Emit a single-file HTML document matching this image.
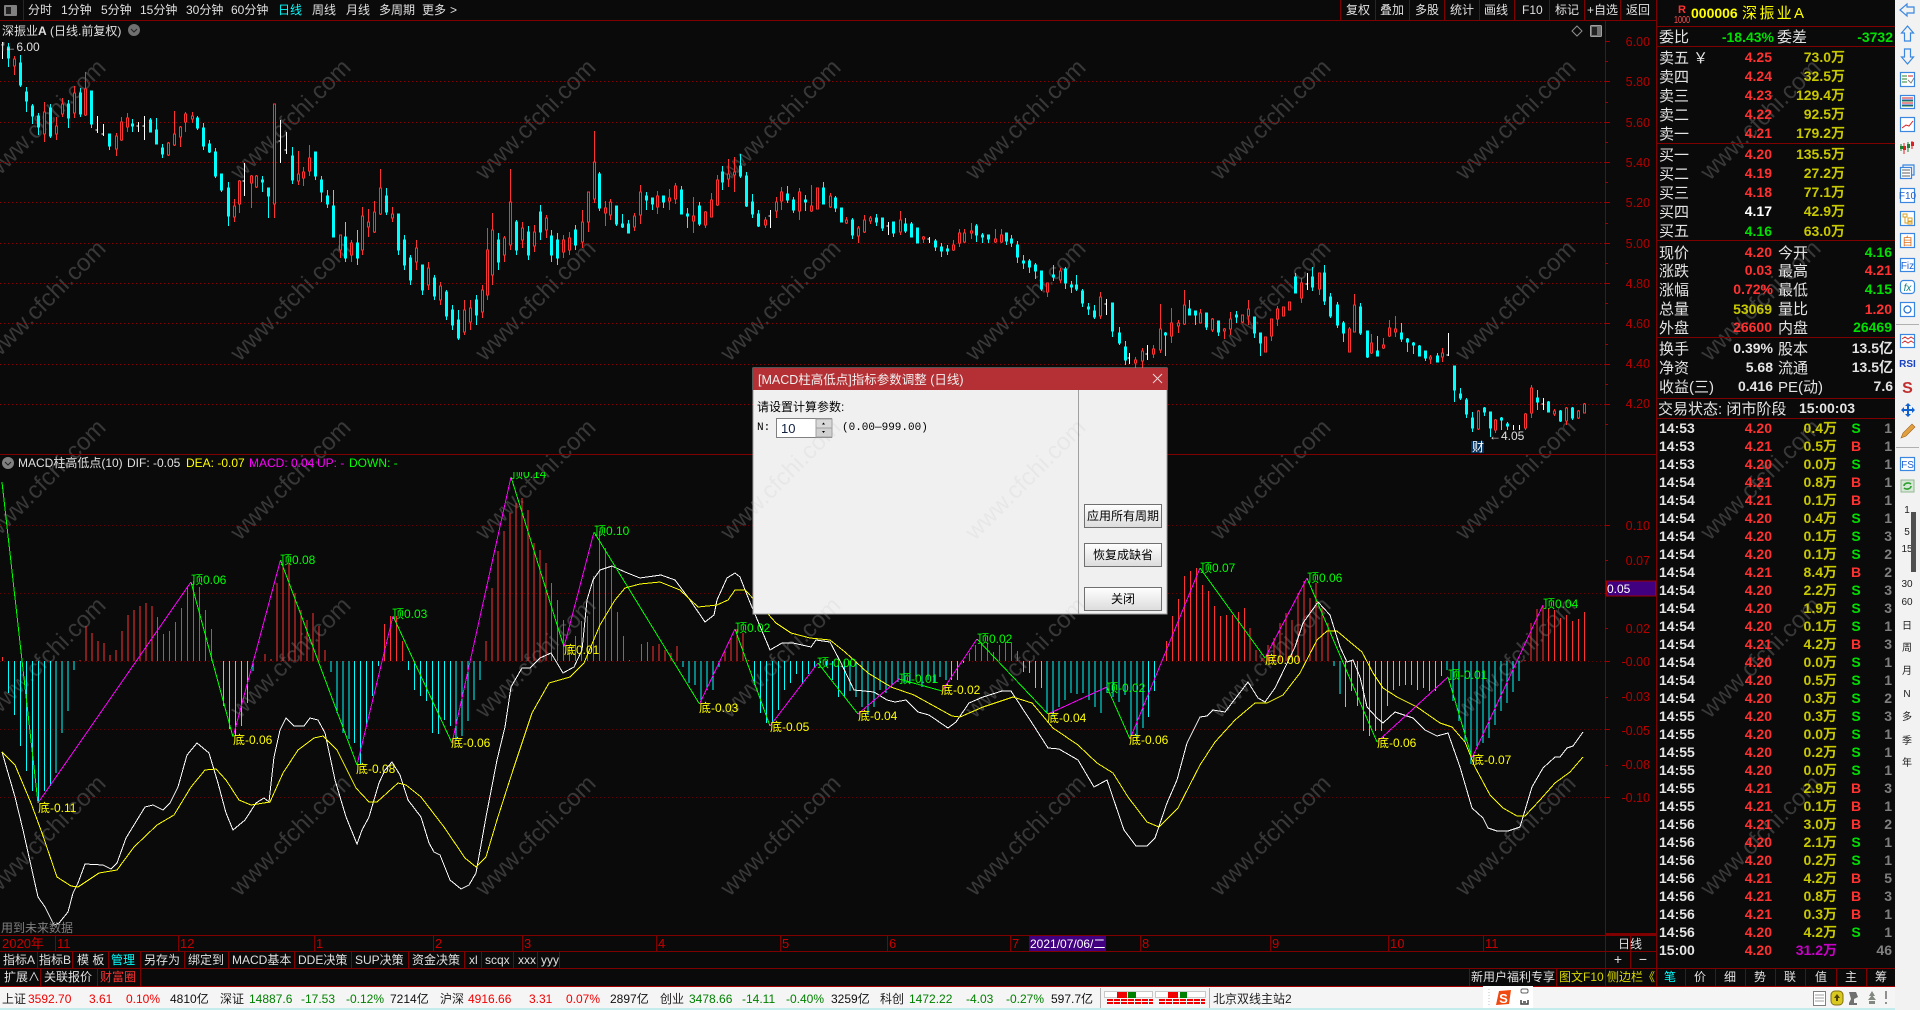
<!DOCTYPE html>
<html lang="zh"><head><meta charset="utf-8"><title>深振业A</title>
<style>
html,body{margin:0;padding:0;background:#0a0a0a;width:1920px;height:1010px;overflow:hidden}
svg{display:block;font-family:"Liberation Sans","WenQuanYi Zen Hei","Noto Sans CJK SC",sans-serif;font-size:12px}
.w text{font-size:24px;fill:#383838;text-anchor:middle}
.wd text{font-size:24px;fill:rgba(0,0,0,.035);text-anchor:middle}
.c{shape-rendering:crispEdges}
.lb text{font-size:15px;fill:#e4e4e4}
.b{font-size:14px;font-weight:bold}
.r{text-anchor:end}
.m{text-anchor:middle}
.ax text{fill:#b40000;text-anchor:end;font-size:12.5px}
.ty text{fill:#ffff00}.tg text{fill:#00ff00}
.nav text{fill:#e0e0e0;font-size:12px}
.tick text{font-size:14px;font-weight:bold}
.st text{font-size:12px}
</style></head><body>
<svg width="1920" height="1010" viewBox="0 0 1920 1010" xmlns="http://www.w3.org/2000/svg">
<defs>
<clipPath id="up"><rect x="0" y="450" width="1605" height="211"/></clipPath>
<clipPath id="dn"><rect x="0" y="661" width="1605" height="270"/></clipPath>
<clipPath id="dl"><rect x="753" y="390" width="414" height="224"/></clipPath>
<clipPath id="top14"><rect x="500" y="472" width="60" height="20"/></clipPath>
<clipPath id="ch"><rect x="0" y="455" width="1605" height="479"/></clipPath>
<linearGradient id="bt" x1="0" y1="0" x2="0" y2="1"><stop offset="0" stop-color="#fff"/><stop offset="1" stop-color="#dcdcdc"/></linearGradient>
<path id="hb" d="M2.5 661v-4m5.97 4v32m5.97-32v54m5.97-54v85m5.97-85v110m5.97-110v130m5.97-130v141m5.97-141v130m5.97-130v125m5.97-125v112m5.97-112v72m5.97-72v50m5.97-50v9m5.97-9v-1m5.97 1v-35m5.97 35v-28m5.97 28v-20m5.97 20v-18m5.97 18v-6m5.97 6v-11m5.97 11v-30m5.97 30v-46m5.97 46v-51m5.97 51v-55m5.97 55v-58m5.97 58v-55m5.97 55v-44m5.97 44v-27m5.97 27v-30m5.97 30v-39m5.97 39v-53m5.97 53v-75m5.97 75v-80m5.97 80v-74m5.97 74v-51m5.97 51v-32m5.97 32m5.97 0v45m5.97-45v68m5.97-68v75m5.97-75v65m5.97-65v42m5.97-42v10m5.97-10m5.97 0v-7m5.97 7v-2m5.97 2v-78m5.97 78v-100m5.97 100v-98m5.97 98v-68m5.97 68v-51m5.97 51v-41m5.97 41v-48m5.97 48v-35m5.97 35v-11m5.97 11v11m5.97-11v52m5.97-52v72m5.97-72v78m5.97-78v82m5.97-82v104m5.97-104v64m5.97-64v35m5.97-35v5m5.97-5v-37m5.97 37v-45m5.97 45v-45m5.97 45v-20m5.97 20v9m5.97-9v29m5.97-29v35m5.97-35v40m5.97-40v72m5.97-72v73m5.97-73v59m5.97-59v65m5.97-65v79m5.97-79v75m5.97-75v60m5.97-60v39m5.97-39v19m5.97-19v-20m5.97 20v-73m5.97 73v-110m5.97 110v-130m5.97 130v-148m5.97 148v-158m5.97 158v-163m5.97 163v-151m5.97 151v-118m5.97 118v-111m5.97 111v-98m5.97 98v-78m5.97 78v-61m5.97 61v-41m5.97 41v-15m5.97 15v-25m5.97 25v-40m5.97 40v-45m5.97 45v-85m5.97 85v-130m5.97 130v-113m5.97 113v-95m5.97 95v-49m5.97 49v-25m5.97 25v-1m5.97 1m5.97 0v-17m5.97 17v-19m5.97 19v-15m5.97 15v-17m5.97 17v-11m5.97 11v-8m5.97 8v-15m5.97 15v6m5.97-6v22m5.97-22v24m5.97-24v39m5.97-39v29m5.97-29v29m5.97-29v6m5.97-6v-9m5.97 9v-24m5.97 24v-32m5.97 32v-28m5.97 28v-1m5.97 1v24m5.97-24v52m5.97-52v62m5.97-62v62m5.97-62v49m5.97-49v29m5.97-29v22m5.97-22v13m5.97-13v22m5.97-22v13m5.97-13v7m5.97-7v2m5.97-2v5m5.97-5v19m5.97-19v36m5.97-36v36m5.97-36v30m5.97-30v36m5.97-36v46m5.97-46v54m5.97-54v46m5.97-46v29m5.97-29v32m5.97-32v24m5.97-24v21m5.97-21v22m5.97-22v22m5.97-22v16m5.97-16v26m5.97-26v19m5.97-19v22m5.97-22v16m5.97-16v19m5.97-19v19m5.97-19v19m5.97-19v2m5.97-2v-8m5.97 8v-16m5.97 16v-19m5.97 19v-18m5.97 18v-9m5.97 9v-16m5.97 16v-19m5.97 19v-18m5.97 18v-10m5.97 10v11m5.97-11v12m5.97-12v27m5.97-27v27m5.97-27v52m5.97-52v56m5.97-56v46m5.97-46v39m5.97-39v32m5.97-32v33m5.97-33v32m5.97-32v39m5.97-39v46m5.97-46v52m5.97-52v32m5.97-32v36m5.97-36v41m5.97-41v34m5.97-34v74m5.97-74v79m5.97-79v67m5.97-67v56m5.97-56v30m5.97-30m5.97 0v-20m5.97 20v-45m5.97 45v-62m5.97 62v-85m5.97 85v-90m5.97 90v-93m5.97 93v-76m5.97 76v-70m5.97 70v-55m5.97 55v-45m5.97 45v-46m5.97 46v-46m5.97 46v-49m5.97 49v-53m5.97 53v-33m5.97 33v-11m5.97 11v-3m5.97 3v-16m5.97 16v-23m5.97 23v-38m5.97 38v-48m5.97 48v-41m5.97 41v-68m5.97 68v-80m5.97 80v-63m5.97 63v-78m5.97 78v-53m5.97 53v-38m5.97 38v5m5.97-5v33m5.97-33v46m5.97-46v30m5.97-30v45m5.97-45v70m5.97-70v75m5.97-75v70m5.97-70v70m5.97-70v45m5.97-45v29m5.97-29v25m5.97-25v24m5.97-24v24m5.97-24v29m5.97-29v27m5.97-27v30m5.97-30v30m5.97-30v15m5.97-15v9m5.97-9v40m5.97-40v60m5.97-60v80m5.97-80v103m5.97-103v85m5.97-85v82m5.97-82v77m5.97-77v64m5.97-64v50m5.97-50v42m5.97-42v31m5.97-31v20m5.97-20v-1m5.97 1v-38m5.97 38v-52m5.97 52v-56m5.97 56v-53m5.97 53v-51m5.97 51v-43m5.97 43v-46m5.97 46v-40m5.97 40v-42m5.97 42v-49"/>
</defs>
<rect width="1920" height="1010" fill="#0a0a0a"/>

<g class="w">
<text transform="translate(51,125) rotate(-45)">www.cfchi.com</text><text transform="translate(296,125) rotate(-45)">www.cfchi.com</text><text transform="translate(541,125) rotate(-45)">www.cfchi.com</text><text transform="translate(786,125) rotate(-45)">www.cfchi.com</text><text transform="translate(1031,125) rotate(-45)">www.cfchi.com</text><text transform="translate(1276,125) rotate(-45)">www.cfchi.com</text><text transform="translate(1521,125) rotate(-45)">www.cfchi.com</text><text transform="translate(1766,125) rotate(-45)">www.cfchi.com</text>
<text transform="translate(51,306) rotate(-45)">www.cfchi.com</text><text transform="translate(296,306) rotate(-45)">www.cfchi.com</text><text transform="translate(541,306) rotate(-45)">www.cfchi.com</text><text transform="translate(786,306) rotate(-45)">www.cfchi.com</text><text transform="translate(1031,306) rotate(-45)">www.cfchi.com</text><text transform="translate(1276,306) rotate(-45)">www.cfchi.com</text><text transform="translate(1521,306) rotate(-45)">www.cfchi.com</text><text transform="translate(1766,306) rotate(-45)">www.cfchi.com</text>
<text transform="translate(51,485) rotate(-45)">www.cfchi.com</text><text transform="translate(296,485) rotate(-45)">www.cfchi.com</text><text transform="translate(541,485) rotate(-45)">www.cfchi.com</text><text transform="translate(786,485) rotate(-45)">www.cfchi.com</text><text transform="translate(1031,485) rotate(-45)">www.cfchi.com</text><text transform="translate(1276,485) rotate(-45)">www.cfchi.com</text><text transform="translate(1521,485) rotate(-45)">www.cfchi.com</text><text transform="translate(1766,485) rotate(-45)">www.cfchi.com</text>
<text transform="translate(51,663) rotate(-45)">www.cfchi.com</text><text transform="translate(296,663) rotate(-45)">www.cfchi.com</text><text transform="translate(541,663) rotate(-45)">www.cfchi.com</text><text transform="translate(786,663) rotate(-45)">www.cfchi.com</text><text transform="translate(1031,663) rotate(-45)">www.cfchi.com</text><text transform="translate(1276,663) rotate(-45)">www.cfchi.com</text><text transform="translate(1521,663) rotate(-45)">www.cfchi.com</text><text transform="translate(1766,663) rotate(-45)">www.cfchi.com</text>
<text transform="translate(51,841) rotate(-45)">www.cfchi.com</text><text transform="translate(296,841) rotate(-45)">www.cfchi.com</text><text transform="translate(541,841) rotate(-45)">www.cfchi.com</text><text transform="translate(786,841) rotate(-45)">www.cfchi.com</text><text transform="translate(1031,841) rotate(-45)">www.cfchi.com</text><text transform="translate(1276,841) rotate(-45)">www.cfchi.com</text><text transform="translate(1521,841) rotate(-45)">www.cfchi.com</text><text transform="translate(1766,841) rotate(-45)">www.cfchi.com</text>
</g>

<!-- grids -->
<path class="c" d="M0 81.5H1605M0 122.5H1605M0 162.5H1605M0 202.5H1605M0 243.5H1605M0 283.5H1605M0 323.5H1605M0 364.5H1605M0 404.5H1605" stroke="#8c0000" stroke-dasharray="1 3" fill="none"/>
<path class="c" d="M0 525.5H1605M0 593.5H1605M0 661.5H1605M0 729.5H1605M0 797.5H1605" stroke="#640000" stroke-dasharray="1 3" fill="none"/>

<!-- candles: cyan -->
<path class="c" fill="#00ffff" stroke="#00ffff" d="M8.5 43V47m-1 0h2v11h-2zm1 11V67M20.5 55V63m-1 0h2v22h-2zm1 22V87M26.5 87V92m-1 0h2v9h-2zm1 9V112M32.5 104V106m-1 0h2v10h-2zm1 10V124M38.5 113V116m-1 0h2v11h-2zm1 11V135M50.5 104V108m-1 0h2v28h-2zm1 28V138M68.5 100V104m-1 0h2v14h-2zm1 14V128M80.5 88V93m-1 0h2v21h-2zm1 21V117M91.5 91V91m-1 0h2v33h-2zm1 33V128M109.5 134V134m-1 0h2v12h-2zm1 12V150M132.5 119V124m-1 0h2v2h-2zm1 2V132M150.5 118V120m-1 0h2v12h-2zm1 12V132M156.5 118V130m-1 0h2v14h-2zm1 14V144M162.5 144V148m-1 0h2v6h-2zm1 6V158M197.5 116V118m-1 0h2v10h-2zm1 10V130M203.5 123V128m-1 0h2v18h-2zm1 18V150M209.5 140V144m-1 0h2v8h-2zm1 8V153M215.5 148V152m-1 0h2v24h-2zm1 24V178M221.5 174V174m-1 0h2v16h-2zm1 16V192M228.5 182V188m-1 0h2v28h-2zm1 28V226M262.5 176V180m-1 0h2v2h-2zm1 2V192M268.5 188V188m-1 0h2v8h-2zm1 8V218M292.5 147V156m-1 0h2v24h-2zm1 24V184M315.5 152V152m-1 0h2v24h-2zm1 24V180M321.5 176V180m-1 0h2v12h-2zm1 12V202M327.5 190V196m-1 0h2v8h-2zm1 8V208M333.5 190V206m-1 0h2v31h-2zm1 31V237M345.5 222V237m-1 0h2v21h-2zm1 21V262M357.5 230V243m-1 0h2v15h-2zm1 15V265M386.5 188V196m-1 0h2v16h-2zm1 16V215M398.5 214V214m-1 0h2v36h-2zm1 36V255M404.5 235V240m-1 0h2v25h-2zm1 25V270M410.5 255V258m-1 0h2v22h-2zm1 22V285M422.5 265V265m-1 0h2v25h-2zm1 25V295M434.5 275V278m-1 0h2v18h-2zm1 18V300M446.5 290V292m-1 0h2v24h-2zm1 24V320M452.5 305V310m-1 0h2v15h-2zm1 15V330M458.5 310V320m-1 0h2v18h-2zm1 18V340M476.5 295V300m-1 0h2v15h-2zm1 15V325M498.5 233V240m-1 0h2v22h-2zm1 22V270M516.5 220V222m-1 0h2v28h-2zm1 28V255M528.5 226V232m-1 0h2v23h-2zm1 23V260M540.5 205V212m-1 0h2v20h-2zm1 20V240M551.5 230V236m-1 0h2v19h-2zm1 19V262M557.5 233V240m-1 0h2v18h-2zm1 18V265M575.5 225V230m-1 0h2v15h-2zm1 15V250M599.5 172V174m-1 0h2v34h-2zm1 34V211M616.5 206V206m-1 0h2v18h-2zm1 18V226M622.5 214V224m-1 0h2v3h-2zm1 3V228M628.5 220V224m-1 0h2v9h-2zm1 9V233M646.5 192V196m-1 0h2v4h-2zm1 4V210M652.5 198V198m-1 0h2v6h-2zm1 6V210M663.5 196V196m-1 0h2v6h-2zm1 6V208M681.5 186V190m-1 0h2v24h-2zm1 24V214M687.5 208V214m-1 0h2v2h-2zm1 2V228M699.5 202V206m-1 0h2v18h-2zm1 18V226M722.5 166V172m-1 0h2v10h-2zm1 10V190M740.5 154V166m-1 0h2v10h-2zm1 10V178M746.5 172V176m-1 0h2v30h-2zm1 30V207M752.5 194V202m-1 0h2v12h-2zm1 12V218M758.5 210V214m-1 0h2v12h-2zm1 12V227M787.5 186V194m-1 0h2v6h-2zm1 6V203M793.5 197V200m-1 0h2v10h-2zm1 10V213M805.5 195V200m-1 0h2v2h-2zm1 2V211M823.5 182V188m-1 0h2v16h-2zm1 16V204M835.5 196V198m-1 0h2v10h-2zm1 10V212M841.5 208V208m-1 0h2v14h-2zm1 14V222M852.5 218V220m-1 0h2v15h-2zm1 15V239M876.5 214V218m-1 0h2v4h-2zm1 4V226M882.5 218V218m-1 0h2v10h-2zm1 10V231M893.5 222V222m-1 0h2v11h-2zm1 11V237M905.5 218V224m-1 0h2v7h-2zm1 7V233M911.5 222V224m-1 0h2v13h-2zm1 13V237M917.5 228V228m-1 0h2v15h-2zm1 15V243M935.5 239V241m-1 0h2v6h-2zm1 6V251M941.5 243V247m-1 0h2v4h-2zm1 4V257M947.5 245V249m-1 0h2v2h-2zm1 2V255M976.5 224V226m-1 0h2v9h-2zm1 9V242M982.5 233V235m-1 0h2v2h-2zm1 2V243M988.5 235V235m-1 0h2v4h-2zm1 4V243M1006.5 233V233m-1 0h2v8h-2zm1 8V245M1011.5 235V239m-1 0h2v4h-2zm1 4V247M1017.5 241V245m-1 0h2v12h-2zm1 12V263M1023.5 255V261m-1 0h2v2h-2zm1 2V269M1029.5 259V261m-1 0h2v6h-2zm1 6V273M1035.5 263V265m-1 0h2v6h-2zm1 6V279M1041.5 271V271m-1 0h2v18h-2zm1 18V291M1053.5 265V275m-1 0h2v2h-2zm1 2V281M1065.5 267V269m-1 0h2v14h-2zm1 14V289M1071.5 281V285m-1 0h2v2h-2zm1 2V293M1076.5 275V285m-1 0h2v4h-2zm1 4V291M1082.5 289V291m-1 0h2v12h-2zm1 12V307M1088.5 303V307m-1 0h2v2h-2zm1 2V315M1094.5 305V311m-1 0h2v6h-2zm1 6V319M1112.5 303V303m-1 0h2v28h-2zm1 28V337M1119.5 327V333m-1 0h2v10h-2zm1 10V345M1125.5 341V347m-1 0h2v13h-2zm1 13V365M1165.5 332V333m-1 0h2v2h-2zm1 2V356M1189.5 300V309m-1 0h2v6h-2zm1 6V315M1195.5 311V311m-1 0h2v4h-2zm1 4V325M1206.5 313V313m-1 0h2v14h-2zm1 14V330M1218.5 321V321m-1 0h2v11h-2zm1 11V336M1236.5 311V315m-1 0h2v2h-2zm1 2V323M1254.5 317V317m-1 0h2v16h-2zm1 16V338M1260.5 333V333m-1 0h2v10h-2zm1 10V356M1295.5 273V277m-1 0h2v16h-2zm1 16V293M1312.5 267V277m-1 0h2v10h-2zm1 10V291M1324.5 265V273m-1 0h2v28h-2zm1 28V305M1330.5 293V297m-1 0h2v19h-2zm1 19V318M1337.5 302V305m-1 0h2v20h-2zm1 20V328M1343.5 321V323m-1 0h2v10h-2zm1 10V342M1360.5 303V307m-1 0h2v26h-2zm1 26V335M1367.5 331V331m-1 0h2v26h-2zm1 26V358M1377.5 336V351m-1 0h2v5h-2zm1 5V356M1401.5 323V333m-1 0h2v6h-2zm1 6V342M1407.5 338V339m-1 0h2v3h-2zm1 3V352M1413.5 342V343m-1 0h2v2h-2zm1 2V354M1419.5 345V346m-1 0h2v10h-2zm1 10V356M1425.5 351V351m-1 0h2v7h-2zm1 7V361M1437.5 353V356m-1 0h2v6h-2zm1 6V362M1454.5 366V366m-1 0h2v24h-2zm1 24V402M1460.5 388V394m-1 0h2v4h-2zm1 4V400M1466.5 398V400m-1 0h2v14h-2zm1 14V418M1472.5 412V418m-1 0h2v10h-2zm1 10V432M1484.5 407V408m-1 0h2v4h-2zm1 4V416M1490.5 412V412m-1 0h2v16h-2zm1 16V437M1501.5 417V418m-1 0h2v2h-2zm1 2V430M1507.5 422V424m-1 0h2v2h-2zm1 2V430M1537.5 390V398m-1 0h2v4h-2zm1 4V410M1548.5 401V402m-1 0h2v10h-2zm1 10V412M1560.5 410V411m-1 0h2v10h-2zm1 10V422M1572.5 407V408m-1 0h2v10h-2zm1 10V420"/>
<!-- candles: red -->
<path class="c" fill="#0a0a0a" stroke="#ff3232" d="M14.5 56V59m-1 0h2v7h-2zm1 7V75M44.5 102V112m-1 0h2v22h-2zm1 22V142M56.5 117V126m-1 0h2v8h-2zm1 8V140M62.5 98V104m-1 0h2v10h-2zm1 10V117M74.5 86V93m-1 0h2v20h-2zm1 20V118M85.5 72V89m-1 0h2v26h-2zm1 26V116M116.5 133V136m-1 0h2v13h-2zm1 13V156M121.5 117V122m-1 0h2v18h-2zm1 18V141M127.5 113V118m-1 0h2v9h-2zm1 9V132M168.5 142V143m-1 0h2v12h-2zm1 12V156M174.5 111V134m-1 0h2v11h-2zm1 11V146M180.5 126V127m-1 0h2v10h-2zm1 10V147M185.5 112V114m-1 0h2v8h-2zm1 8V132M192.5 112V116m-1 0h2v3h-2zm1 3V123M234.5 199V206m-1 0h2v11h-2zm1 11V222M239.5 180V181m-1 0h2v23h-2zm1 23V213M251.5 175V176m-1 0h2v7h-2zm1 7V208M256.5 175V176m-1 0h2v11h-2zm1 11V188M274.5 104V104m-1 0h2v100h-2zm1 100V218M298.5 151V174m-1 0h2v7h-2zm1 7V185M303.5 167V172m-1 0h2v6h-2zm1 6V186M309.5 145V158m-1 0h2v13h-2zm1 13V176M340.5 235V235m-1 0h2v15h-2zm1 15V258M351.5 240V243m-1 0h2v12h-2zm1 12V262M362.5 207V216m-1 0h2v34h-2zm1 34V255M368.5 209V222m-1 0h2v5h-2zm1 5V237M374.5 201V212m-1 0h2v20h-2zm1 20V233M380.5 169V188m-1 0h2v26h-2zm1 26V215M392.5 207V214m-1 0h2v4h-2zm1 4V222M416.5 240V248m-1 0h2v14h-2zm1 14V270M428.5 262V268m-1 0h2v17h-2zm1 17V290M440.5 282V286m-1 0h2v14h-2zm1 14V305M464.5 300V310m-1 0h2v22h-2zm1 22V335M470.5 300V308m-1 0h2v14h-2zm1 14V330M482.5 285V290m-1 0h2v22h-2zm1 22V318M487.5 228V250m-1 0h2v45h-2zm1 45V300M492.5 213V230m-1 0h2v45h-2zm1 45V285M504.5 236V238m-1 0h2v17h-2zm1 17V262M510.5 169V202m-1 0h2v43h-2zm1 43V250M522.5 222V228m-1 0h2v12h-2zm1 12V248M534.5 225V232m-1 0h2v14h-2zm1 14V252M546.5 215V218m-1 0h2v12h-2zm1 12V238M563.5 235V240m-1 0h2v12h-2zm1 12V258M569.5 232V238m-1 0h2v12h-2zm1 12V255M582.5 210V222m-1 0h2v20h-2zm1 20V248M588.5 192V192m-1 0h2v30h-2zm1 30V232M594.5 131V162m-1 0h2v37h-2zm1 37V203M605.5 201V208m-1 0h2v5h-2zm1 5V226M610.5 199V202m-1 0h2v13h-2zm1 13V220M634.5 213V216m-1 0h2v11h-2zm1 11V231M640.5 185V192m-1 0h2v23h-2zm1 23V224M657.5 191V196m-1 0h2v11h-2zm1 11V214M669.5 189V198m-1 0h2v3h-2zm1 3V210M675.5 183V186m-1 0h2v13h-2zm1 13V204M693.5 197V216m-1 0h2v5h-2zm1 5V233M705.5 211V212m-1 0h2v13h-2zm1 13V228M711.5 193V200m-1 0h2v17h-2zm1 17V217M717.5 175V180m-1 0h2v25h-2zm1 25V206M728.5 159V174m-1 0h2v5h-2zm1 5V187M734.5 157V172m-1 0h2v3h-2zm1 3V192M765.5 217V220m-1 0h2v5h-2zm1 5V228M776.5 197V202m-1 0h2v9h-2zm1 9V218M781.5 187V192m-1 0h2v9h-2zm1 9V210M799.5 188V192m-1 0h2v19h-2zm1 19V220M811.5 185V206m-1 0h2v5h-2zm1 5V212M817.5 188V188m-1 0h2v21h-2zm1 21V209M830.5 193V196m-1 0h2v11h-2zm1 11V208M846.5 217V220m-1 0h2v3h-2zm1 3V224M858.5 226V228m-1 0h2v8h-2zm1 8V243M864.5 215V220m-1 0h2v12h-2zm1 12V233M870.5 216V218m-1 0h2v3h-2zm1 3V224M900.5 211V220m-1 0h2v12h-2zm1 12V235M923.5 236V237m-1 0h2v2h-2zm1 2V243M953.5 240V245m-1 0h2v5h-2zm1 5V251M959.5 229V233m-1 0h2v10h-2zm1 10V247M964.5 229V233m-1 0h2v9h-2zm1 9V243M971.5 223V231m-1 0h2v2h-2zm1 2V239M995.5 229V239m-1 0h2v3h-2zm1 3V243M1001.5 229V235m-1 0h2v7h-2zm1 7V243M1047.5 283V283m-1 0h2v9h-2zm1 9V297M1060.5 268V271m-1 0h2v9h-2zm1 9V283M1100.5 292V297m-1 0h2v19h-2zm1 19V319M1135.5 357V360m-1 0h2v3h-2zm1 3V368M1142.5 348V351m-1 0h2v10h-2zm1 10V368M1153.5 345V349m-1 0h2v5h-2zm1 5V358M1160.5 304V329m-1 0h2v21h-2zm1 21V353M1171.5 308V323m-1 0h2v13h-2zm1 13V343M1178.5 320V323m-1 0h2v3h-2zm1 3V333M1184.5 290V305m-1 0h2v19h-2zm1 19V325M1200.5 309V313m-1 0h2v10h-2zm1 10V323M1212.5 318V319m-1 0h2v11h-2zm1 11V332M1224.5 328V329m-1 0h2v2h-2zm1 2V339M1230.5 312V319m-1 0h2v10h-2zm1 10V335M1242.5 315V315m-1 0h2v7h-2zm1 7V323M1248.5 300V309m-1 0h2v7h-2zm1 7V325M1265.5 337V337m-1 0h2v15h-2zm1 15V352M1271.5 319V319m-1 0h2v17h-2zm1 17V341M1277.5 306V309m-1 0h2v10h-2zm1 10V326M1283.5 307V307m-1 0h2v9h-2zm1 9V316M1289.5 302V302m-1 0h2v8h-2zm1 8V310M1301.5 278V283m-1 0h2v15h-2zm1 15V303M1319.5 273V273m-1 0h2v16h-2zm1 16V295M1349.5 327V329m-1 0h2v23h-2zm1 23V352M1354.5 294V305m-1 0h2v27h-2zm1 27V332M1371.5 334V343m-1 0h2v10h-2zm1 10V354M1383.5 338V345m-1 0h2v3h-2zm1 3V349M1389.5 320V328m-1 0h2v8h-2zm1 8V337M1395.5 316V329m-1 0h2v3h-2zm1 3V337M1430.5 355V357m-1 0h2v2h-2zm1 2V364M1442.5 348V353m-1 0h2v4h-2zm1 4V362M1478.5 410V411m-1 0h2v18h-2zm1 18V430M1495.5 419V420m-1 0h2v10h-2zm1 10V433M1525.5 413V414m-1 0h2v14h-2zm1 14V430M1531.5 385V388m-1 0h2v25h-2zm1 25V418M1554.5 409V411m-1 0h2v3h-2zm1 3V416M1566.5 407V408m-1 0h2v13h-2zm1 13V425M1578.5 410V411m-1 0h2v7h-2zm1 7V419M1584.5 403V404m-1 0h2v9h-2zm1 9V413"/>
<!-- candles: white doji -->
<path class="c" fill="none" stroke="#fff" d="M2.5 42V59M97.5 116V133m-2-3h2M103.5 124V136m-2-2h2M138.5 122V132m-2-6h2M144.5 116V140m-2-14h2M244.5 163V196m-2-15h2M280.5 120V163m-2-22h2M286.5 132V154m-2-4h2M770.5 210V228m-2-12h2M888.5 222V235m-2-9h2M929.5 237V243m-2-4h2M1106.5 299V315m-2-11h2M1129.5 353V364m-2-6h2M1147.5 345V360m-2-6h2M1307.5 273V290m-2-6h2M1448.5 333V356m-2-1h2M1513.5 425V430M1519.5 425V430M1543.5 398V410m-2-6h2"/>

<!-- MACD histogram -->
<g class="c" fill="none">
<g clip-path="url(#up)"><use href="#hb" stroke="#ff3232"/></g>
<g clip-path="url(#dn)"><use href="#hb" stroke="#00ffff"/></g>
</g>

<!-- DIF / DEA -->
<g clip-path="url(#ch)" fill="none" stroke-width="1" class="c">
<polyline stroke="#fff" points="2,752 15,797 23,830 38,897 45,907 54,925 59,923 68,912 73,893 78,883 85,864 103,865 111,869 117,863 126,838 145,807 153,805 163,810 170,803 178,787 187,755 197,743 209,753 218,783 226,813 233,830 245,820 256,803 264,798 269,802 274,757 280,730 286,718 294,726 304,726 310,718 318,720 325,733 335,780 346,817 357,844 362,830 369,817 379,783 385,770 392,762 400,775 408,800 421,817 429,843 434,852 440,855 450,880 461,889 469,885 476,873 486,817 497,760 505,727 511,687 522,668 530,668 540,658 551,653 563,673 574,667 582,650 587,600 593,580 600,570 612,566 625,572 640,578 661,575 675,580 690,600 705,622 714,615 717,600 727,578 735,573 740,577 749,600 770,650 782,643 793,643 811,647 816,640 830,642 841,663 854,690 874,692 887,700 895,702 906,700 918,712 929,715 948,728 956,722 969,703 983,697 1002,691 1011,691 1032,723 1048,748 1059,749 1078,760 1094,787 1107,780 1124,830 1136,846 1147,846 1155,838 1167,803 1177,780 1187,743 1200,717 1207,716 1213,710 1225,712 1248,682 1258,698 1265,702 1275,688 1295,647 1303,623 1318,602 1330,615 1340,647 1347,662 1353,660 1360,677 1367,707 1377,718 1383,723 1395,712 1413,718 1425,730 1437,736 1448,733 1460,767 1472,808 1483,818 1488,828 1497,831 1508,831 1520,827 1532,787 1543,768 1555,757 1560,757 1567,748 1573,746 1583,732"/>
<polyline stroke="#ffff00" points="2,752 15,765 31,803 42,833 57,877 71,886 78,887 99,873 117,870 134,847 157,825 174,815 191,787 205,770 216,769 226,780 239,800 251,805 270,802 283,773 298,750 314,738 323,736 337,750 356,788 369,802 377,802 398,783 406,785 421,797 444,827 465,858 476,867 486,857 497,820 513,770 532,713 549,683 570,677 584,663 600,625 615,600 625,588 640,584 660,582 680,590 698,607 717,605 728,600 735,590 745,590 768,614 776,623 791,633 810,638 830,640 845,652 868,673 891,687 914,695 952,716 960,717 983,707 1013,697 1032,703 1053,728 1078,745 1097,763 1113,773 1128,797 1147,822 1159,827 1178,808 1200,765 1215,742 1235,720 1255,703 1267,703 1283,695 1300,673 1317,640 1327,631 1337,631 1350,642 1362,652 1373,673 1383,688 1397,697 1417,707 1440,723 1452,727 1465,742 1475,767 1490,795 1503,808 1517,816 1525,816 1540,800 1555,783 1570,772 1583,757"/>
<!-- zigzag -->
<path stroke="#ff00ff" d="M38 803L191 582M233 737L280.500 560M357 765L393 616M452 743L511 477M564 647L594 532M699.500 704L735 629M770 726L818 663M858 714L899 679M942 691L977 639M1048 714L1107 687M1130 739L1200 568M1265 658L1307 578M1377 742L1448 677M1472 758L1543 605"/>
<path stroke="#00ff00" d="M2 482L38 803M191 582L233 737M280.500 560L357 765M393 616L452 743M511 477L564 647M594 532L699.500 704M735 629L770 726M818 663L858 714M899 679L942 691M977 639L1048 714M1107 687L1130 739M1200 568L1265 658M1307 578L1377 742M1448 677L1472 758"/>
</g>

<!-- pivot labels -->
<g class="tg">
<text x="191" y="584">顶0.06</text><text x="280" y="564">顶0.08</text><text x="392" y="618">顶0.03</text><text x="511" y="478" clip-path="url(#top14)">顶0.14</text><text x="594" y="535">顶0.10</text><text x="735" y="632">顶0.02</text><text x="817" y="667">顶-0.00</text><text x="899" y="683">顶-0.01</text><text x="977" y="643">顶0.02</text><text x="1106" y="692">顶-0.02</text><text x="1200" y="572">顶0.07</text><text x="1307" y="582">顶0.06</text><text x="1448" y="679">顶-0.01</text><text x="1543" y="608">顶0.04</text>
</g>
<g class="ty">
<text x="38" y="812">底-0.11</text><text x="233" y="744">底-0.06</text><text x="356" y="773">底-0.08</text><text x="451" y="747">底-0.06</text><text x="564" y="654">底0.01</text><text x="699" y="712">底-0.03</text><text x="770" y="731">底-0.05</text><text x="858" y="720">底-0.04</text><text x="941" y="694">底-0.02</text><text x="1047" y="722">底-0.04</text><text x="1129" y="744">底-0.06</text><text x="1265" y="664">底0.00</text><text x="1377" y="747">底-0.06</text><text x="1472" y="764">底-0.07</text>
</g>

<!-- titles over chart -->
<text x="2" y="35" fill="#e0e0e0">深振业<tspan font-weight="bold">A</tspan> (日线.前复权)</text>
<circle cx="134" cy="30" r="6" fill="#707070"/><path d="M131 29l3 3 3-3" fill="none" stroke="#222"/>
<text x="1" y="51" fill="#e0e0e0">f←6.00</text>
<path d="M1577 26l5 5-5 5-5-5z" fill="none" stroke="#909090"/>
<rect x="1590.500" y="25.500" width="11" height="11" rx="1" fill="#707070" stroke="#a0a0a0"/><rect x="1592" y="27" width="5" height="8" fill="#222"/>
<text x="1489" y="440" fill="#e0e0e0">←4.05</text>
<rect x="1471" y="441" width="13" height="12" fill="#003060"/><text x="1472" y="451" fill="#fff">财</text>
<circle cx="8" cy="463" r="6" fill="#808080"/><path d="M5 462l3 3 3-3" fill="none" stroke="#222"/>
<text x="18" y="467" fill="#e0e0e0">MACD柱高低点(10)</text>
<text x="127" y="467" fill="#e0e0e0">DIF: -0.05</text>
<text x="186" y="467" fill="#ffff00">DEA: -0.07</text>
<text x="249" y="467" fill="#ff00ff">MACD: 0.04</text>
<text x="317" y="467" fill="#ff00ff">UP: -</text>
<text x="349" y="467" fill="#00ff00">DOWN: -</text>
<text x="1" y="932" fill="#808080">用到未来数据</text>

<!-- frame lines -->
<path class="c" stroke="#800000" fill="none" d="M0 20.500H1656M0 454.500H1656M0 935.500H1656M0 951.500H1656M0 968.500H1656M23.500 0V20M1340.500 0V20M1375.500 0V20M1409.500 0V20M1444.500 0V20M1479.500 0V20M1514.500 0V20M1549.500 0V20M1584.500 0V20M1620.500 0V20M1605.500 20V968M1656.500 0V986M1606 934.500H1656M1606 933.500H1656M1630.500 935V968M1656 26.500H1895M1656 46.500H1895M1656 143.500H1895M1656 240.500H1895M1656 337.500H1895M1656 398.500H1895M1656 418.500H1895M1656 968.500H1895"/>
<path class="c" stroke="#a00000" fill="none" d="M1605 41.500h5M1605 61.500h3M1605 81.500h5M1605 102.500h3M1605 122.500h5M1605 142.500h3M1605 162.500h5M1605 182.500h3M1605 202.500h5M1605 223.500h3M1605 243.500h5M1605 263.500h3M1605 283.500h5M1605 303.500h3M1605 323.500h5M1605 344.500h3M1605 364.500h5M1605 384.500h3M1605 404.500h5M1605 424.500h3M1605 525.500h5M1605 560.500h3M1605 593.500h5M1605 628.500h3M1605 661.500h5M1605 697.500h3M1605 729.500h5M1605 765.500h3M1605 797.500h5"/>

<!-- y axis labels -->
<g class="ax">
<text x="1650" y="46">6.00</text><text x="1650" y="86">5.80</text><text x="1650" y="127">5.60</text><text x="1650" y="167">5.40</text><text x="1650" y="207">5.20</text><text x="1650" y="248">5.00</text><text x="1650" y="288">4.80</text><text x="1650" y="328">4.60</text><text x="1650" y="368">4.40</text><text x="1650" y="408">4.20</text>
<text x="1650" y="530">0.10</text><text x="1650" y="565">0.07</text><text x="1650" y="633">0.02</text><text x="1650" y="666">-0.00</text><text x="1650" y="701">-0.03</text><text x="1650" y="735">-0.05</text><text x="1650" y="769">-0.08</text><text x="1650" y="802">-0.10</text>
</g>
<rect class="c" x="1606.500" y="581" width="49" height="15" fill="#400080" stroke="#a00000"/>
<text x="1607" y="593" fill="#fff">0.05</text>

<!-- top nav -->
<rect x="4" y="5" width="13" height="11" rx="1" fill="#808080"/><rect x="6" y="7" width="5" height="7" fill="#222"/>
<g class="nav">
<text x="28" y="14">分时</text><text x="61" y="14">1分钟</text><text x="101" y="14">5分钟</text><text x="140" y="14">15分钟</text><text x="186" y="14">30分钟</text><text x="231" y="14">60分钟</text><text x="278" y="14" style="fill:#00ffff">日线</text><text x="312" y="14">周线</text><text x="346" y="14">月线</text><text x="379" y="14">多周期</text><text x="422" y="14">更多</text><text x="450" y="14">&gt;</text>
<text x="1346" y="14">复权</text><text x="1380" y="14">叠加</text><text x="1415" y="14">多股</text><text x="1450" y="14">统计</text><text x="1484" y="14">画线</text><text x="1522" y="14">F10</text><text x="1555" y="14">标记</text><text x="1587" y="14">+自选</text><text x="1626" y="14">返回</text>
</g>

<!-- time axis -->
<path class="c" stroke="#800000" d="M55.500 935V951M178.500 935V951M314.500 935V951M433.500 935V951M522.500 935V951M656.500 935V951M780.500 935V951M887.500 935V951M1010.500 935V951M1140.500 935V951M1270.500 935V951M1388.500 935V951M1483.500 935V951M37.500 951V968M72.500 951V968M108.500 951V968M140.500 951V968M184.500 951V968M228.500 951V968M294.500 951V968M351.500 951V968M408.500 951V968M464.500 951V968M481.500 951V968M513.500 951V968M537.500 951V968M559.500 951V968M40.500 968V986M97.500 968V986M140.500 968V986M1469.500 968V986M1556.500 968V986M1605.500 968V986M1685.500 968V986M1715.500 968V986M1745.500 968V986M1775.500 968V986M1805.500 968V986M1836.500 968V986M1866.500 968V986"/>
<g fill="#c80000" font-size="13">
<text x="2" y="948">2020年</text><text x="57" y="948">11</text><text x="180" y="948">12</text><text x="316" y="948">1</text><text x="435" y="948">2</text><text x="524" y="948">3</text><text x="658" y="948">4</text><text x="782" y="948">5</text><text x="889" y="948">6</text><text x="1012" y="948">7</text><text x="1142" y="948">8</text><text x="1272" y="948">9</text><text x="1390" y="948">10</text><text x="1485" y="948">11</text>
</g>
<rect class="c" x="1029" y="936" width="77" height="15" fill="#400080"/>
<text x="1030" y="948" fill="#fff">2021/07/06/二</text>
<text x="1618" y="948" fill="#e0e0e0" >日线</text>
<text x="1618" y="964" fill="#e0e0e0" class="m" font-size="14">+</text><text x="1643" y="964" fill="#e0e0e0" class="m" font-size="14">−</text>

<!-- tabs -->
<g class="nav">
<text x="3" y="964">指标A</text><text x="39" y="964">指标B</text><text x="77" y="964">模 板</text><text x="111" y="964" style="fill:#00ffff">管理</text><text x="144" y="964">另存为</text><text x="188" y="964">绑定到</text><text x="232" y="964">MACD基本</text><text x="298" y="964">DDE决策</text><text x="355" y="964">SUP决策</text><text x="412" y="964">资金决策</text><text x="469" y="964">xl</text><text x="485" y="964">scqx</text><text x="518" y="964">xxx</text><text x="541" y="964">yyy</text>
<text x="4" y="981">扩展∧</text><text x="44" y="981">关联报价</text><text x="100" y="981" style="fill:#ff3232">财富圈</text>
<text x="1471" y="981">新用户福利专享</text><text x="1559" y="981" style="fill:#d8d800">图文F10</text><text x="1607" y="981" style="fill:#d8d800">侧边栏《</text>
<text x="1670" y="981" class="m" style="fill:#00ffff;text-anchor:middle">笔</text><text x="1700" y="981" style="text-anchor:middle">价</text><text x="1730" y="981" style="text-anchor:middle">细</text><text x="1760" y="981" style="text-anchor:middle">势</text><text x="1790" y="981" style="text-anchor:middle">联</text><text x="1821" y="981" style="text-anchor:middle">值</text><text x="1851" y="981" style="text-anchor:middle">主</text><text x="1881" y="981" style="text-anchor:middle">筹</text>
</g>

<!-- right panel -->
<text x="1682" y="13" fill="#ff3232" font-size="11" font-weight="bold" class="m">R</text>
<text x="1682" y="23" fill="#ff5050" font-size="10" class="m" textLength="16" lengthAdjust="spacingAndGlyphs">1000</text>
<text x="1691" y="18" fill="#ffff00" font-size="14" font-weight="bold">000006</text>
<text x="1742" y="18" fill="#ffff00" font-size="15" textLength="62">深振业A</text>
<g class="lb">
<text x="1659" y="42">委比</text><text x="1777" y="42">委差</text>
<text x="1659" y="63">卖五 ￥</text><text x="1659" y="82">卖四</text><text x="1659" y="101">卖三</text><text x="1659" y="120">卖二</text><text x="1659" y="139">卖一</text>
<text x="1659" y="160">买一</text><text x="1659" y="179">买二</text><text x="1659" y="198">买三</text><text x="1659" y="217">买四</text><text x="1659" y="236">买五</text>
<text x="1659" y="258">现价</text><text x="1778" y="258">今开</text>
<text x="1659" y="276">涨跌</text><text x="1778" y="276">最高</text>
<text x="1659" y="295">涨幅</text><text x="1778" y="295">最低</text>
<text x="1659" y="314">总量</text><text x="1778" y="314">量比</text>
<text x="1659" y="333">外盘</text><text x="1778" y="333">内盘</text>
<text x="1659" y="354">换手</text><text x="1778" y="354">股本</text>
<text x="1659" y="373">净资</text><text x="1778" y="373">流通</text>
<text x="1659" y="392">收益(三)</text><text x="1778" y="392">PE(动)</text>
<text x="1658" y="414">交易状态: 闭市阶段</text>
</g>
<g class="b">
<text x="1774" y="42" class="r" fill="#00e000">-18.43%</text><text x="1893" y="42" class="r" fill="#00e000">-3732</text>
<g class="r" fill="#ff3232" text-anchor="end"><text x="1772" y="62">4.25</text><text x="1772" y="81">4.24</text><text x="1772" y="100">4.23</text><text x="1772" y="119">4.22</text><text x="1772" y="138">4.21</text><text x="1772" y="159">4.20</text><text x="1772" y="178">4.19</text><text x="1772" y="197">4.18</text></g>
<text x="1772" y="216" class="r" fill="#fff">4.17</text><text x="1772" y="236" class="r" fill="#00e000">4.16</text>
<g class="r" fill="#c8c800" text-anchor="end"><text x="1845" y="62">73.0万</text><text x="1845" y="81">32.5万</text><text x="1845" y="100">129.4万</text><text x="1845" y="119">92.5万</text><text x="1845" y="138">179.2万</text><text x="1845" y="159">135.5万</text><text x="1845" y="178">27.2万</text><text x="1845" y="197">77.1万</text><text x="1845" y="216">42.9万</text><text x="1845" y="236">63.0万</text></g>
<text x="1772" y="257" class="r" fill="#ff3232">4.20</text><text x="1892" y="257" class="r" fill="#00e000">4.16</text>
<text x="1772" y="275" class="r" fill="#ff3232">0.03</text><text x="1892" y="275" class="r" fill="#ff3232">4.21</text>
<text x="1773" y="294" class="r" fill="#ff3232">0.72%</text><text x="1892" y="294" class="r" fill="#00e000">4.15</text>
<text x="1772" y="314" class="r" fill="#c8c800">53069</text><text x="1892" y="314" class="r" fill="#ff3232">1.20</text>
<text x="1772" y="332" class="r" fill="#ff3232">26600</text><text x="1892" y="332" class="r" fill="#00e000">26469</text>
<g class="r" fill="#e4e4e4" text-anchor="end"><text x="1773" y="353">0.39%</text><text x="1893" y="353">13.5亿</text><text x="1773" y="372">5.68</text><text x="1893" y="372">13.5亿</text><text x="1773" y="391">0.416</text><text x="1893" y="391">7.6</text></g>
<text x="1799" y="413" fill="#e4e4e4">15:00:03</text>
</g>

<!-- ticks -->
<g class="tick">
<g fill="#e4e4e4">
<text x="1659" y="433">14:53</text><text x="1659" y="451">14:53</text><text x="1659" y="469">14:53</text><text x="1659" y="487">14:54</text><text x="1659" y="505">14:54</text><text x="1659" y="523">14:54</text><text x="1659" y="541">14:54</text><text x="1659" y="559">14:54</text><text x="1659" y="577">14:54</text><text x="1659" y="595">14:54</text><text x="1659" y="613">14:54</text><text x="1659" y="631">14:54</text><text x="1659" y="649">14:54</text><text x="1659" y="667">14:54</text><text x="1659" y="685">14:54</text><text x="1659" y="703">14:54</text><text x="1659" y="721">14:55</text><text x="1659" y="739">14:55</text><text x="1659" y="757">14:55</text><text x="1659" y="775">14:55</text><text x="1659" y="793">14:55</text><text x="1659" y="811">14:55</text><text x="1659" y="829">14:56</text><text x="1659" y="847">14:56</text><text x="1659" y="865">14:56</text><text x="1659" y="883">14:56</text><text x="1659" y="901">14:56</text><text x="1659" y="919">14:56</text><text x="1659" y="937">14:56</text><text x="1659" y="955">15:00</text>
</g>
<g fill="#ff3232" text-anchor="end">
<text x="1772" y="433">4.20</text><text x="1772" y="451">4.21</text><text x="1772" y="469">4.20</text><text x="1772" y="487">4.21</text><text x="1772" y="505">4.21</text><text x="1772" y="523">4.20</text><text x="1772" y="541">4.20</text><text x="1772" y="559">4.20</text><text x="1772" y="577">4.21</text><text x="1772" y="595">4.20</text><text x="1772" y="613">4.20</text><text x="1772" y="631">4.20</text><text x="1772" y="649">4.21</text><text x="1772" y="667">4.20</text><text x="1772" y="685">4.20</text><text x="1772" y="703">4.20</text><text x="1772" y="721">4.20</text><text x="1772" y="739">4.20</text><text x="1772" y="757">4.20</text><text x="1772" y="775">4.20</text><text x="1772" y="793">4.21</text><text x="1772" y="811">4.21</text><text x="1772" y="829">4.21</text><text x="1772" y="847">4.20</text><text x="1772" y="865">4.20</text><text x="1772" y="883">4.21</text><text x="1772" y="901">4.21</text><text x="1772" y="919">4.21</text><text x="1772" y="937">4.20</text><text x="1772" y="955">4.20</text>
</g>
<g fill="#c8c800" text-anchor="end">
<text x="1837" y="433">0.4万</text><text x="1837" y="451">0.5万</text><text x="1837" y="469">0.0万</text><text x="1837" y="487">0.8万</text><text x="1837" y="505">0.1万</text><text x="1837" y="523">0.4万</text><text x="1837" y="541">0.1万</text><text x="1837" y="559">0.1万</text><text x="1837" y="577">8.4万</text><text x="1837" y="595">2.2万</text><text x="1837" y="613">1.9万</text><text x="1837" y="631">0.1万</text><text x="1837" y="649">4.2万</text><text x="1837" y="667">0.0万</text><text x="1837" y="685">0.5万</text><text x="1837" y="703">0.3万</text><text x="1837" y="721">0.3万</text><text x="1837" y="739">0.0万</text><text x="1837" y="757">0.2万</text><text x="1837" y="775">0.0万</text><text x="1837" y="793">2.9万</text><text x="1837" y="811">0.1万</text><text x="1837" y="829">3.0万</text><text x="1837" y="847">2.1万</text><text x="1837" y="865">0.2万</text><text x="1837" y="883">4.2万</text><text x="1837" y="901">0.8万</text><text x="1837" y="919">0.3万</text><text x="1837" y="937">4.2万</text>
</g>
<text x="1837" y="955" text-anchor="end" fill="#c800c8">31.2万</text>
<g text-anchor="middle" fill="#00e000">
<text x="1856" y="433">S</text><text x="1856" y="469">S</text><text x="1856" y="523">S</text><text x="1856" y="541">S</text><text x="1856" y="559">S</text><text x="1856" y="595">S</text><text x="1856" y="613">S</text><text x="1856" y="631">S</text><text x="1856" y="667">S</text><text x="1856" y="685">S</text><text x="1856" y="703">S</text><text x="1856" y="721">S</text><text x="1856" y="739">S</text><text x="1856" y="757">S</text><text x="1856" y="775">S</text><text x="1856" y="847">S</text><text x="1856" y="865">S</text><text x="1856" y="937">S</text>
</g>
<g text-anchor="middle" fill="#ff3232">
<text x="1856" y="451">B</text><text x="1856" y="487">B</text><text x="1856" y="505">B</text><text x="1856" y="577">B</text><text x="1856" y="649">B</text><text x="1856" y="793">B</text><text x="1856" y="811">B</text><text x="1856" y="829">B</text><text x="1856" y="883">B</text><text x="1856" y="901">B</text><text x="1856" y="919">B</text>
</g>
<g text-anchor="end" fill="#808080">
<text x="1892" y="433">1</text><text x="1892" y="451">1</text><text x="1892" y="469">1</text><text x="1892" y="487">1</text><text x="1892" y="505">1</text><text x="1892" y="523">1</text><text x="1892" y="541">3</text><text x="1892" y="559">2</text><text x="1892" y="577">2</text><text x="1892" y="595">3</text><text x="1892" y="613">3</text><text x="1892" y="631">1</text><text x="1892" y="649">3</text><text x="1892" y="667">1</text><text x="1892" y="685">1</text><text x="1892" y="703">2</text><text x="1892" y="721">3</text><text x="1892" y="739">1</text><text x="1892" y="757">1</text><text x="1892" y="775">1</text><text x="1892" y="793">3</text><text x="1892" y="811">1</text><text x="1892" y="829">2</text><text x="1892" y="847">1</text><text x="1892" y="865">1</text><text x="1892" y="883">5</text><text x="1892" y="901">3</text><text x="1892" y="919">1</text><text x="1892" y="937">1</text><text x="1892" y="955">46</text>
</g>
</g>

<!-- right sidebar -->
<rect x="1895" y="0" width="25" height="1010" fill="#f2f2f2"/>
<g fill="none" stroke="#3a86e0" stroke-width="1.200">
<path d="M1900 10l7-6v3h7v6h-7v3z"/>
<path d="M1907.500 26l6 7h-3v8h-6v-8h-3z"/>
<path d="M1907.500 64l6-7h-3v-8h-6v8h-3z"/>
<rect x="1900.500" y="72.500" width="14" height="14" fill="#fff"/>
<rect x="1900.500" y="95.500" width="14" height="13" fill="#fff"/>
<rect x="1900.500" y="117.500" width="14" height="14" fill="#fff"/>
<rect x="1900.500" y="167.500" width="11" height="11" fill="#fff"/><path d="M1903 167v-2h11v10h-2"/>
<rect x="1900.500" y="188.500" width="14" height="14" fill="#fff"/>
<rect x="1900.500" y="211.500" width="14" height="14" fill="#fff"/>
<rect x="1900.500" y="233.500" width="14" height="14" fill="#fff"/>
<rect x="1900.500" y="258.500" width="14" height="13" fill="#fff"/>
<rect x="1900.500" y="280.500" width="14" height="13" rx="3" fill="#fff"/>
<rect x="1900.500" y="302.500" width="14" height="14" fill="#fff"/>
<circle cx="1907.500" cy="309.500" r="3.500" stroke="#2070d0"/>
<rect x="1900.500" y="334.500" width="14" height="13" fill="#fff"/>
<rect x="1900.500" y="457.500" width="14" height="13" fill="#fff"/>
</g>
<path stroke="#2a8030" d="M1902 76h5M1902 79h5M1902 82h5" /><path stroke="#d02020" d="M1908 76h5"/><path stroke="#808080" fill="none" d="M1908 80l3 3 3-5"/>
<path class="c" stroke="#d02020" d="M1902 98h11M1902 103h11"/><path class="c" stroke="#2050c0" d="M1902 100h11M1902 105h11"/><path class="c" stroke="#208030" d="M1902 101h11M1902 106h11"/>
<path d="M1902 128l4-3 3 1 4-5" fill="none" stroke="#e02020"/>
<path stroke="#208030" d="M1901 144v7M1908 142v10"/><path stroke="#e02020" d="M1904 143v11M1912 141v8"/><path fill="#e02020" d="M1903 146h3v4h-3zM1911 142h3v4h-3z"/><path fill="#208030" d="M1900 146h3v3h-3zM1907 144h3v4h-3z"/>
<path stroke="#606060" d="M1902 170h8M1902 173h8M1902 176h8"/>
<text x="1907.500" y="199" font-size="10" fill="#2060d0" class="m">F10</text>
<path fill="none" stroke="#d8a020" d="M1903 214h4v3h-4zM1908 218h4v3h-4zM1908 222h4v2h-4zM1905 217v6h3"/>
<text x="1907.500" y="245" font-size="11" fill="#e07020" class="m">自</text>
<text x="1907.500" y="269" font-size="10" fill="#2060d0" class="m">Fiz</text>
<text x="1907.500" y="291" font-size="10" fill="#108080" class="m" font-style="italic">fx</text>
<path d="M1902 339l3-2 3 2 3-2 3 2M1902 343l3-2 3 2 3-2 3 2" fill="none" stroke="#d03030"/>
<path class="c" stroke="#b0b0b0" d="M1896 324.500H1919M1896 447.500H1919"/>
<text x="1907.500" y="367" font-size="10" font-weight="bold" fill="#1840c0" class="m">RSI</text>
<text x="1907.500" y="393" font-size="16" font-weight="bold" fill="#c03030" class="m">S</text>
<path d="M1908 403l3 3h-2v3h3v-2l3 3-3 3v-2h-3v3h2l-3 3-3-3h2v-3h-3v2l-3-3 3-3v2h3v-3h-2z" fill="#1060d0"/>
<path d="M1901 438l2-5 9-9 3 3-9 9z" fill="#e0a040" stroke="#a06020" stroke-width=".6"/>
<text x="1907.500" y="468" font-size="10" fill="#2060d0" class="m">FS</text>
<rect x="1901" y="480" width="13" height="12" fill="#d8e8d8" stroke="#90b890"/><path d="M1904 486a4 3 0 0 1 7-2M1911 486a4 3 0 0 1-7 2" fill="none" stroke="#30a030" stroke-width="1.600"/>
<g fill="#202020" font-size="10" text-anchor="middle">
<text x="1907" y="513">1</text><text x="1907" y="535">5</text><text x="1907" y="552">15</text><text x="1907" y="587">30</text><text x="1907" y="605">60</text><text x="1907" y="629">日</text><text x="1907" y="651">周</text><text x="1907" y="674">月</text><text x="1907" y="697">N</text><text x="1907" y="720">多</text><text x="1907" y="744">季</text><text x="1907" y="766">年</text>
</g>
<rect x="1911" y="512" width="5" height="60" fill="#505050"/>

<!-- status bar -->
<rect x="0" y="986" width="1895" height="1" fill="#a80000"/>
<rect x="0" y="987" width="1895" height="21" fill="#f5f5f5"/>
<rect x="0" y="1008" width="1895" height="2" fill="#c4ecec"/>
<g class="st">
<text x="2" y="1003" fill="#202020">上证</text><text x="28" y="1003" fill="#f00000">3592.70</text><text x="89" y="1003" fill="#f00000">3.61</text><text x="126" y="1003" fill="#f00000">0.10%</text><text x="170" y="1003" fill="#101010">4810亿</text>
<text x="220" y="1003" fill="#202020">深证</text><text x="249" y="1003" fill="#008000">14887.6</text><text x="301" y="1003" fill="#008000">-17.53</text><text x="346" y="1003" fill="#008000">-0.12%</text><text x="390" y="1003" fill="#101010">7214亿</text>
<text x="440" y="1003" fill="#202020">沪深</text><text x="468" y="1003" fill="#f00000">4916.66</text><text x="529" y="1003" fill="#f00000">3.31</text><text x="566" y="1003" fill="#f00000">0.07%</text><text x="610" y="1003" fill="#101010">2897亿</text>
<text x="660" y="1003" fill="#202020">创业</text><text x="689" y="1003" fill="#008000">3478.66</text><text x="742" y="1003" fill="#008000">-14.11</text><text x="786" y="1003" fill="#008000">-0.40%</text><text x="831" y="1003" fill="#101010">3259亿</text>
<text x="880" y="1003" fill="#202020">科创</text><text x="909" y="1003" fill="#008000">1472.22</text><text x="966" y="1003" fill="#008000">-4.03</text><text x="1006" y="1003" fill="#008000">-0.27%</text><text x="1051" y="1003" fill="#101010">597.7亿</text>
<text x="1213" y="1003" fill="#202020">北京双线主站2</text>
</g>
<path class="c" stroke="#b0b0b0" d="M1100.500 988V1008M1209.500 988V1008"/>
<rect class="c" x="1104.500" y="991.500" width="48" height="6" fill="#fff" stroke="#c8c8c8"/><rect class="c" x="1155.500" y="991.500" width="50" height="6" fill="#fff" stroke="#c8c8c8"/>
<rect x="1117" y="992" width="10" height="6" fill="#f00000"/><rect x="1128" y="992" width="8" height="6" fill="#008000"/><rect x="1168" y="992" width="10" height="6" fill="#f00000"/><rect x="1180" y="992" width="7" height="6" fill="#008000"/>
<path class="c" stroke="#f00000" stroke-width="2" stroke-dasharray="6 1" d="M1107 1000H1153M1107 1003H1153M1159 1000H1205M1159 1003H1205"/>
<rect x="1483" y="986" width="50" height="22" fill="#fff"/>
<path d="M1489 989v17" stroke="#c0c0c0" stroke-dasharray="1 2"/>
<path d="M1499 991l12-1-2 14-13 1z" fill="#f04a10"/><text x="1503.500" y="1003" fill="#fff" font-size="13" font-weight="bold" class="m">S</text>
<rect x="1521" y="989" width="7" height="4" rx="1.500" fill="none" stroke="#606060"/><path d="M1521 1000v4h7v-4M1523 1002h3" fill="none" stroke="#404040" stroke-width="1.500"/>
<rect x="1813.500" y="991.500" width="12" height="14" fill="#fff" stroke="#808080"/><path stroke="#a0a0a0" d="M1815 995h9M1815 998h9M1815 1001h9"/>
<rect x="1831" y="991" width="12" height="14" rx="4" fill="#d8c820" stroke="#807010"/><path d="M1837 994l3 4h-2v3h-2v-3h-2z" fill="#504000"/>
<path d="M1849 992h7l2 5-4 2v4h3v2h-8v-2l2-4z" fill="#707070"/>
<path d="M1872 991l3 5h-6zM1872 995l4 5h-8zM1869 1001h6v3h-6z" fill="#808880"/>
<path d="M1886 991v8M1886 1002v2" stroke="#909090" stroke-width="2"/>

<!-- dialog -->
<rect x="753" y="368" width="414" height="246" fill="#f0f0f0" stroke="#a0a0a0"/>
<rect x="753" y="368" width="414" height="22" fill="#b53034"/>
<text x="758" y="384" fill="#f0f0f0" font-size="12.5">[MACD柱高低点]指标参数调整 (日线)</text>
<path d="M1153 374l9 9M1162 374l-9 9" stroke="#f0d8d8" fill="none"/>
<path class="c" stroke="#a0a0a0" d="M1078.500 390V614"/>
<g class="wd" clip-path="url(#dl)">
<text transform="translate(786,485) rotate(-45)">www.cfchi.com</text><text transform="translate(1031,485) rotate(-45)">www.cfchi.com</text><text transform="translate(786,663) rotate(-45)">www.cfchi.com</text><text transform="translate(1031,663) rotate(-45)">www.cfchi.com</text>
</g>
<text x="757" y="411" fill="#000">请设置计算参数:</text>
<text x="757" y="430" fill="#000" font-family="Liberation Mono" font-size="11">N:</text>
<rect class="c" x="776.500" y="418.500" width="55" height="19" fill="#fff" stroke="#808080"/>
<text x="781" y="433" fill="#102040" font-size="13">10</text>
<rect class="c" x="816" y="419" width="16" height="9" fill="#d8d8d8" stroke="#a0a0a0"/><rect class="c" x="816" y="428" width="16" height="9" fill="#d0d0d0" stroke="#a0a0a0"/>
<path d="M822 424.500h3l-1.500-2zM822 431h3l-1.500 2z" fill="#000"/>
<text x="842" y="430" fill="#000" font-family="Liberation Mono" font-size="11">(0.00—999.00)</text>
<g stroke="#707070" fill="url(#bt)" class="c"><rect x="1084.500" y="504.500" width="77" height="23"/><rect x="1084.500" y="543.500" width="77" height="23"/><rect x="1084.500" y="587.500" width="77" height="23"/></g>
<g fill="#000" text-anchor="middle"><text x="1123" y="520">应用所有周期</text><text x="1123" y="559">恢复成缺省</text><text x="1123" y="603">关闭</text></g>
</svg>
</body></html>
